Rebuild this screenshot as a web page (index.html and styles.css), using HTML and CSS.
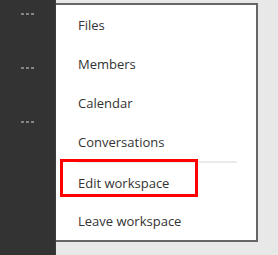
FILE: index.html
```html
<!DOCTYPE html>
<html>
<head>
<meta charset="utf-8">
<link rel="stylesheet" href="styles.css">
</head>
<body>
<div class="app">
  <aside class="sidebar">
    <div class="dots"><span></span><span></span><span></span></div>
    <div class="dots"><span></span><span></span><span></span></div>
    <div class="dots"><span></span><span></span><span></span></div>
  </aside>
  <main class="main">
    <ul class="menu">
      <li class="item">Files</li>
      <li class="item">Members</li>
      <li class="item">Calendar</li>
      <li class="item">Conversations</li>
      <li class="sep"></li>
      <li class="item highlighted">Edit workspace<span class="annot"></span></li>
      <li class="item last">Leave workspace</li>
    </ul>
  </main>
</div>
</body>
</html>
```
FILE: styles.css
```css
html, body {
  margin: 0;
  padding: 0;
}
body {
  background: #e8e8e8;
  font-family: "Open Sans", "Noto Sans", sans-serif;
  width: 278px;
  height: 255px;
  overflow: hidden;
}
.app {
  display: flex;
  height: 255px;
}
.sidebar {
  width: 56px;
  background: #333333;
  border-right: 1px solid #3d3d3d;
  display: flex;
  flex-direction: column;
  align-items: center;
  padding-top: 13px;
  gap: 52px;
  box-sizing: border-box;
}
.dots {
  display: flex;
  gap: 2px;
  height: 2px;
}
.dots span {
  width: 3px;
  height: 2px;
  background: #858585;
}
.main {
  padding-top: 3px;
}
.menu {
  list-style: none;
  margin: 0;
  padding: 0;
  width: 200px;
  background: #ffffff;
  border: 2px solid #666666;
  border-left: none;
}
.item {
  position: relative;
  height: 39px;
  display: flex;
  align-items: center;
  padding-left: 22px;
  font-size: 13px;
  color: #333333;
}
.item.last {
  height: 38px;
}
.sep {
  height: 2px;
  margin: 0 19px 0 21px;
  background: #ebebeb;
}
.annot {
  position: absolute;
  left: 4px;
  top: -4px;
  width: 138px;
  height: 38px;
  box-sizing: border-box;
  border: 3px solid #ff0000;
}
```
